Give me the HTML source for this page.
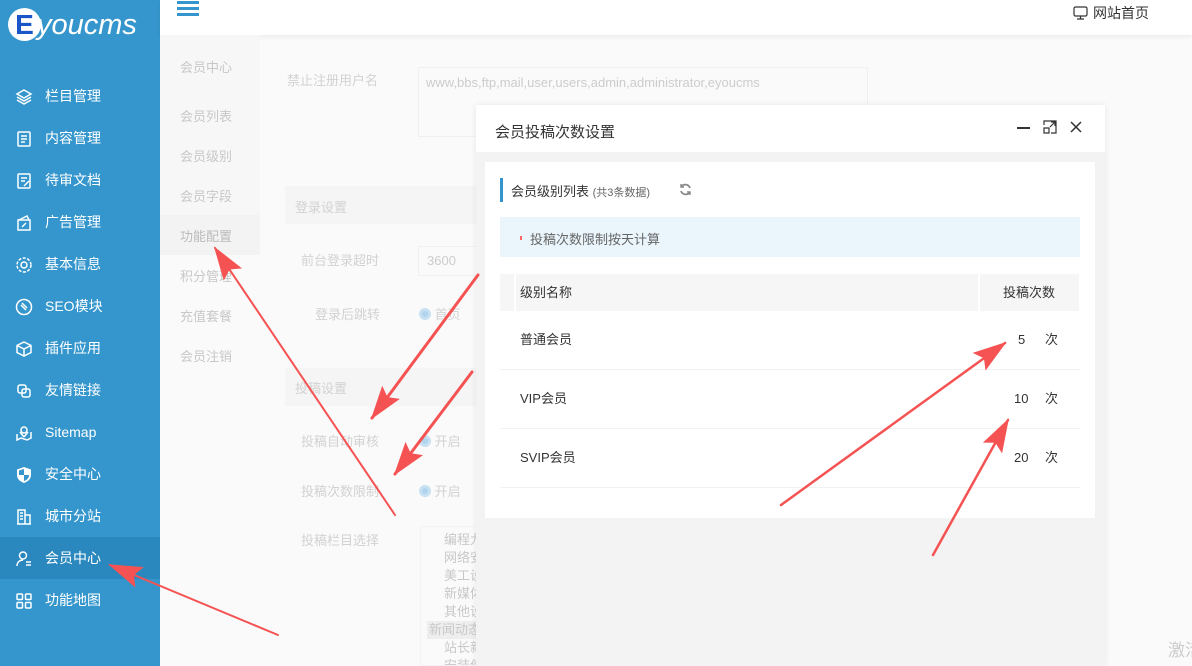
<!DOCTYPE html>
<html><head><meta charset="utf-8">
<style>
*{margin:0;padding:0;box-sizing:border-box}
html,body{width:1192px;height:666px;overflow:hidden}
body{position:relative;background:#fafafa;font-family:"Liberation Sans","Noto Sans CJK SC",sans-serif;font-size:14px}
.abs{position:absolute;white-space:nowrap}
#side{left:0;top:0;width:160px;height:666px;background:#3496cc}
.logo{left:8px;top:8px;color:#fff;font-size:29px;font-style:italic}
.logo .e{display:inline-block;width:33px;height:33px;border-radius:50%;background:#fff;color:#1a56c8;text-align:center;line-height:33px;font-style:normal;font-size:28px;font-weight:bold;margin-right:-4px}
.nav{position:absolute;left:0;width:160px;height:42px;color:#fff;font-size:14px;line-height:42px;padding-left:45px;white-space:nowrap}
.nav.act{background:#2a88bf}
.nav svg{position:absolute;left:15px;top:13px}
#top{left:160px;top:0;width:1032px;height:35px;background:#fff;box-shadow:0 2px 4px rgba(0,0,0,.06)}
.sub{position:absolute;left:180px;color:#c8c8c8;font-size:13px;white-space:nowrap}
.lbl{position:absolute;color:#d2d2d2;font-size:13px;white-space:nowrap}
.t{position:absolute;color:#333;font-size:13px;white-space:nowrap;line-height:16px}
</style></head><body>
<div id="side" class="abs">
 <div class="abs logo"><span class="e">E</span>youcms</div>
 <div class="nav" style="top:75px"><svg width="18" height="18" viewBox="0 0 18 18" fill="none" stroke="#fff" stroke-width="1.5"><path d="M9 2L16 6 9 10 2 6z"/><path d="M2 9l7 4 7-4"/><path d="M2 12l7 4 7-4"/></svg>栏目管理</div>
 <div class="nav" style="top:117px"><svg width="18" height="18" viewBox="0 0 18 18" fill="none" stroke="#fff" stroke-width="1.5"><rect x="3" y="2" width="12" height="14" rx="1"/><path d="M6 6h6M6 9h6M6 12h4"/></svg>内容管理</div>
 <div class="nav" style="top:159px"><svg width="18" height="18" viewBox="0 0 18 18" fill="none" stroke="#fff" stroke-width="1.5"><rect x="3" y="2" width="12" height="14" rx="1"/><path d="M6 6h6M6 9h4M9 14l5-5"/></svg>待审文档</div>
 <div class="nav" style="top:201px"><svg width="18" height="18" viewBox="0 0 18 18" fill="none" stroke="#fff" stroke-width="1.5"><rect x="3" y="6" width="12" height="10"/><path d="M4 6l8-4 2 4M7 13l4-4"/></svg>广告管理</div>
 <div class="nav" style="top:243px"><svg width="18" height="18" viewBox="0 0 18 18" fill="none" stroke="#fff" stroke-width="1.5"><circle cx="9" cy="9" r="3"/><circle cx="9" cy="9" r="7" stroke-dasharray="3 1.5"/></svg>基本信息</div>
 <div class="nav" style="top:285px"><svg width="18" height="18" viewBox="0 0 18 18" fill="none" stroke="#fff" stroke-width="1.5"><circle cx="9" cy="9" r="7.5"/><path d="M6 7l5 5M7 5l5 5"/></svg>SEO模块</div>
 <div class="nav" style="top:327px"><svg width="18" height="18" viewBox="0 0 18 18" fill="none" stroke="#fff" stroke-width="1.5"><path d="M9 2l7 3.5v7L9 16 2 12.5v-7z"/><path d="M2 5.5L9 9l7-3.5M9 9v7"/></svg>插件应用</div>
 <div class="nav" style="top:369px"><svg width="18" height="18" viewBox="0 0 18 18" fill="none" stroke="#fff" stroke-width="1.5"><rect x="3" y="3" width="8" height="8" rx="2"/><rect x="7" y="7" width="8" height="8" rx="2"/></svg>友情链接</div>
 <div class="nav" style="top:411px"><svg width="18" height="18" viewBox="0 0 18 18" fill="none" stroke="#fff" stroke-width="1.5"><circle cx="9" cy="6" r="3"/><path d="M9 13L5 8M9 13l4-5M2 10v6l4-2 6 2 4-2v-6"/></svg>Sitemap</div>
 <div class="nav" style="top:453px"><svg width="18" height="18" viewBox="0 0 18 18"><path d="M9 1L16 3.5V9c0 4-3 6.5-7 8-4-1.5-7-4-7-8V3.5z" fill="#fff"/><path d="M9 3v6H4V4.5zM9 9h5c0 3-2 5-5 6z" fill="#3496cc"/></svg>安全中心</div>
 <div class="nav" style="top:495px"><svg width="18" height="18" viewBox="0 0 18 18" fill="none" stroke="#fff" stroke-width="1.5"><path d="M2 16h14M3 16V2h7v14M10 7h5v9M5 5h3M5 8h3M5 11h3"/></svg>城市分站</div>
 <div class="nav act" style="top:537px"><svg width="18" height="18" viewBox="0 0 18 18" fill="none" stroke="#fff" stroke-width="1.5"><circle cx="8" cy="5.5" r="3.5"/><path d="M2 16c0-4 3-6 6-6M11 12h5M11 15h5"/></svg>会员中心</div>
 <div class="nav" style="top:579px"><svg width="18" height="18" viewBox="0 0 18 18" fill="none" stroke="#fff" stroke-width="1.5"><rect x="2" y="2" width="5.5" height="5.5" rx="1"/><rect x="10.5" y="2" width="5.5" height="5.5" rx="1"/><rect x="2" y="10.5" width="5.5" height="5.5" rx="1"/><rect x="10.5" y="10.5" width="5.5" height="5.5" rx="1"/></svg>功能地图</div>
</div>
<div id="top" class="abs">
 <div class="abs" style="left:17px;top:1px;width:22px"><div style="height:3px;background:#3496cc;margin-bottom:3px"></div><div style="height:3px;background:#3496cc;margin-bottom:3px"></div><div style="height:3px;background:#3496cc"></div></div>
 <div class="abs" style="left:913px;top:3px;color:#333;font-size:14px"><svg width="15" height="14" viewBox="0 0 15 14" fill="none" stroke="#333" stroke-width="1.2" style="vertical-align:-2px;margin-right:5px"><rect x="1" y="1" width="13" height="9" rx="1.5"/><path d="M7.5 10v3M4 13h7"/></svg>网站首页</div>
</div>
<div class="abs" style="left:160px;top:35px;width:100px;height:631px;background:#f7f7f7"></div>
<div class="abs" style="left:160px;top:255px;width:100px;height:411px;background:#fafafa"></div>
<div class="abs" style="left:160px;top:215px;width:100px;height:40px;background:#f3f3f3"></div>
<div class="sub" style="top:57px">会员中心</div>
<div class="sub" style="top:106px">会员列表</div>
<div class="sub" style="top:146px">会员级别</div>
<div class="sub" style="top:186px">会员字段</div>
<div class="sub" style="top:226px;color:#bbb">功能配置</div>
<div class="sub" style="top:266px">积分管理</div>
<div class="sub" style="top:306px">充值套餐</div>
<div class="sub" style="top:346px">会员注销</div>
<div class="lbl" style="left:287px;top:70px">禁止注册用户名</div>
<div class="abs" style="left:418px;top:67px;width:450px;height:70px;border:1px solid #f0f0f0;color:#ccc;padding:7px;font-size:13px">www,bbs,ftp,mail,user,users,admin,administrator,eyoucms</div>
<div class="abs" style="left:285px;top:186px;width:200px;height:38px;background:#f5f5f5"></div>
<div class="lbl" style="left:295px;top:197px">登录设置</div>
<div class="lbl" style="left:301px;top:250px">前台登录超时</div>
<div class="abs" style="left:418px;top:246px;width:60px;height:30px;border:1px solid #f0f0f0;color:#ccc;padding:6px 8px;font-size:13px">3600</div>
<div class="lbl" style="left:315px;top:304px">登录后跳转</div>
<div class="lbl" style="left:419px;top:304px"><span style="display:inline-block;width:12px;height:12px;border-radius:50%;border:3px solid #c7e0f2;background:#b0d3ee;vertical-align:-1px"></span> 首页</div>
<div class="abs" style="left:285px;top:368px;width:200px;height:38px;background:#f5f5f5"></div>
<div class="lbl" style="left:295px;top:378px">投稿设置</div>
<div class="lbl" style="left:301px;top:431px">投稿自动审核</div>
<div class="lbl" style="left:419px;top:431px"><span style="display:inline-block;width:12px;height:12px;border-radius:50%;border:3px solid #c7e0f2;background:#b0d3ee;vertical-align:-1px"></span> 开启</div>
<div class="lbl" style="left:301px;top:481px">投稿次数限制</div>
<div class="lbl" style="left:419px;top:481px"><span style="display:inline-block;width:12px;height:12px;border-radius:50%;border:3px solid #c7e0f2;background:#b0d3ee;vertical-align:-1px"></span> 开启</div>
<div class="lbl" style="left:301px;top:530px">投稿栏目选择</div>
<div class="abs" style="left:420px;top:526px;width:60px;height:140px;border:1px solid #f3f3f3;color:#c8c8c8;font-size:13px;line-height:18px;padding-left:23px;overflow:hidden">
<div style="margin-top:4px">编程九</div><div>网络安</div><div>美工设</div><div>新媒体</div><div>其他设</div><div style="background:#eee;margin-left:-17px;padding-left:2px">新闻动态</div><div>站长新</div><div>安装使</div></div>
<div class="lbl" style="left:1168px;top:636px;font-size:17px;color:#ccc">激活</div>

<div class="abs" style="left:476px;top:105px;width:629px;height:561px;background:#f3f3f3;box-shadow:0 0 6px rgba(0,0,0,.08)">
 <div class="abs" style="left:0;top:0;width:629px;height:47px;background:#fff"></div>
 <div class="abs" style="left:19px;top:16px;color:#333;font-size:15px">会员投稿次数设置</div>
 <div class="abs" style="left:541px;top:22px;width:13px;height:2px;background:#333"></div>
 <svg class="abs" style="left:567px;top:15px" width="14" height="14" viewBox="0 0 14 14" fill="none" stroke="#333" stroke-width="1.2"><path d="M1 5V1h12v12H8M1 8h5v5H1zM7 7l5-5M8 2h4v4"/></svg>
 <svg class="abs" style="left:594px;top:16px" width="12" height="12" viewBox="0 0 12 12" stroke="#333" stroke-width="1.5"><path d="M1 1l10 10M11 1L1 11"/></svg>
 <div class="abs" style="left:9px;top:57px;width:610px;height:356px;background:#fff">
  <div class="abs" style="left:15px;top:16px;width:3px;height:24px;background:#3496cc"></div>
  <div class="abs" style="left:26px;top:19px;color:#333;font-size:13px">会员级别列表 <span style="font-size:11px;color:#666">(共3条数据)</span></div>
  <svg class="abs" style="left:194px;top:21px" width="13" height="13" viewBox="0 0 13 13" fill="none" stroke="#888" stroke-width="1.8"><path d="M11 5A5 5 0 0 0 2 4M2 8a5 5 0 0 0 9 1"/><path d="M2 1v3h3M11 12V9H8" stroke-width="1.4"/></svg>
  <div class="abs" style="left:15px;top:55px;width:580px;height:40px;background:#eaf6fc"></div>
  <div class="abs" style="left:35px;top:74px;width:2px;height:4px;background:#f66"></div>
  <div class="abs" style="left:45px;top:67px;color:#666;font-size:13px">投稿次数限制按天计算</div>
  <div class="abs" style="left:15px;top:112px;width:14px;height:37px;background:#f6f6f6"></div>
  <div class="abs" style="left:31px;top:112px;width:462px;height:37px;background:#f6f6f6"></div>
  <div class="abs" style="left:495px;top:112px;width:99px;height:37px;background:#f6f6f6"></div>
  <div class="t" style="left:35px;top:123px">级别名称</div>
  <div class="t" style="left:518px;top:123px">投稿次数</div>
  <div class="t" style="left:35px;top:170px">普通会员</div>
  <div class="t" style="left:533px;top:170px">5</div>
  <div class="t" style="left:560px;top:170px">次</div>
  <div class="abs" style="left:15px;top:207px;width:580px;height:1px;background:#f2f2f2"></div>
  <div class="t" style="left:35px;top:229px">VIP会员</div>
  <div class="t" style="left:529px;top:229px">10</div>
  <div class="t" style="left:560px;top:229px">次</div>
  <div class="abs" style="left:15px;top:266px;width:580px;height:1px;background:#f2f2f2"></div>
  <div class="t" style="left:35px;top:288px">SVIP会员</div>
  <div class="t" style="left:529px;top:288px">20</div>
  <div class="t" style="left:560px;top:288px">次</div>
  <div class="abs" style="left:15px;top:325px;width:580px;height:1px;background:#f2f2f2"></div>
 </div>
</div>

<svg class="abs" style="left:0;top:0" width="1192" height="666">
<defs><marker id="h" markerUnits="userSpaceOnUse" markerWidth="34" markerHeight="26" refX="32" refY="13" orient="auto"><path d="M0 2L34 13 0 24 6 13z" fill="#f55353"/></marker></defs>
<g stroke="#f55353" stroke-width="3" stroke-linecap="round" marker-end="url(#h)">
<line x1="278" y1="635" x2="110" y2="565" stroke-width="2"/>
<line x1="395" y1="515" x2="215" y2="248" stroke-width="2"/>
<line x1="478" y1="275" x2="372" y2="418"/>
<line x1="472" y1="372" x2="395" y2="474"/>
<line x1="781" y1="505" x2="1005" y2="343" stroke-width="2.5"/>
<line x1="933" y1="555" x2="1008" y2="420" stroke-width="2.5"/>
</g>
</svg>
</body></html>
